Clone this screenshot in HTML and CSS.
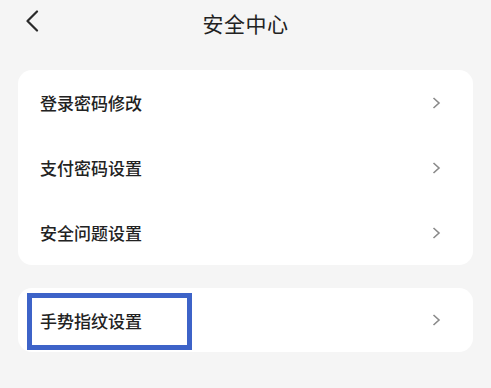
FILE: index.html
```html
<!DOCTYPE html>
<html lang="zh-CN">
<head>
<meta charset="utf-8">
<title>安全中心</title>
<link rel="stylesheet" href="styles.css">
</head>
<body>
<div class="page">
  <header class="topbar">
    <span class="back">
      <svg width="14" height="22" viewBox="0 0 14 22"><path d="M12 1.5 L2.5 11 L12 20.5" fill="none" stroke="#2a2a2a" stroke-width="2.2" stroke-linecap="round" stroke-linejoin="round"/></svg>
    </span>
    <h1 class="title">安全中心</h1>
  </header>
  <section class="card">
    <div class="row"><span class="label">登录密码修改</span><span class="chev"><svg width="9" height="12" viewBox="0 0 9 12"><path d="M1.5 1 L7 6 L1.5 11" fill="none" stroke="#8a8a8a" stroke-width="1.6"/></svg></span></div>
    <div class="row"><span class="label">支付密码设置</span><span class="chev"><svg width="9" height="12" viewBox="0 0 9 12"><path d="M1.5 1 L7 6 L1.5 11" fill="none" stroke="#8a8a8a" stroke-width="1.6"/></svg></span></div>
    <div class="row"><span class="label">安全问题设置</span><span class="chev"><svg width="9" height="12" viewBox="0 0 9 12"><path d="M1.5 1 L7 6 L1.5 11" fill="none" stroke="#8a8a8a" stroke-width="1.6"/></svg></span></div>
  </section>
  <section class="card card-single">
    <div class="row"><span class="label">手势指纹设置</span><span class="chev"><svg width="9" height="12" viewBox="0 0 9 12"><path d="M1.5 1 L7 6 L1.5 11" fill="none" stroke="#8a8a8a" stroke-width="1.6"/></svg></span></div>
    <div class="highlight"></div>
  </section>
</div>
</body>
</html>
```
FILE: styles.css
```css
html, body {
  margin: 0;
  padding: 0;
  background: #f5f5f5;
  font-family: "Noto Sans CJK SC", "Noto Sans", sans-serif;
}
.page {
  width: 491px;
  height: 388px;
  overflow: hidden;
}
.topbar {
  position: relative;
  height: 46px;
  display: flex;
  align-items: center;
  justify-content: center;
}
.back {
  position: absolute;
  left: 25px;
  top: 10px;
  display: flex;
}
.title {
  margin: 0;
  font-size: 21px;
  font-weight: 400;
  color: #222;
  letter-spacing: 0.5px;
}
.card {
  margin: 24px 18px 0;
  background: #fff;
  border-radius: 14px;
}
.card-single {
  margin-top: 23px;
  position: relative;
}
.row {
  height: 65px;
  display: flex;
  align-items: center;
  justify-content: space-between;
  padding: 0 32px 0 22px;
}
.card-single .row {
  height: 64px;
}
.label {
  font-size: 17px;
  font-weight: 500;
  color: #222;
}
.chev {
  display: flex;
}
.highlight {
  position: absolute;
  left: 9px;
  top: 5px;
  width: 155px;
  height: 47px;
  border: 5px solid #3d63c8;
}
```
